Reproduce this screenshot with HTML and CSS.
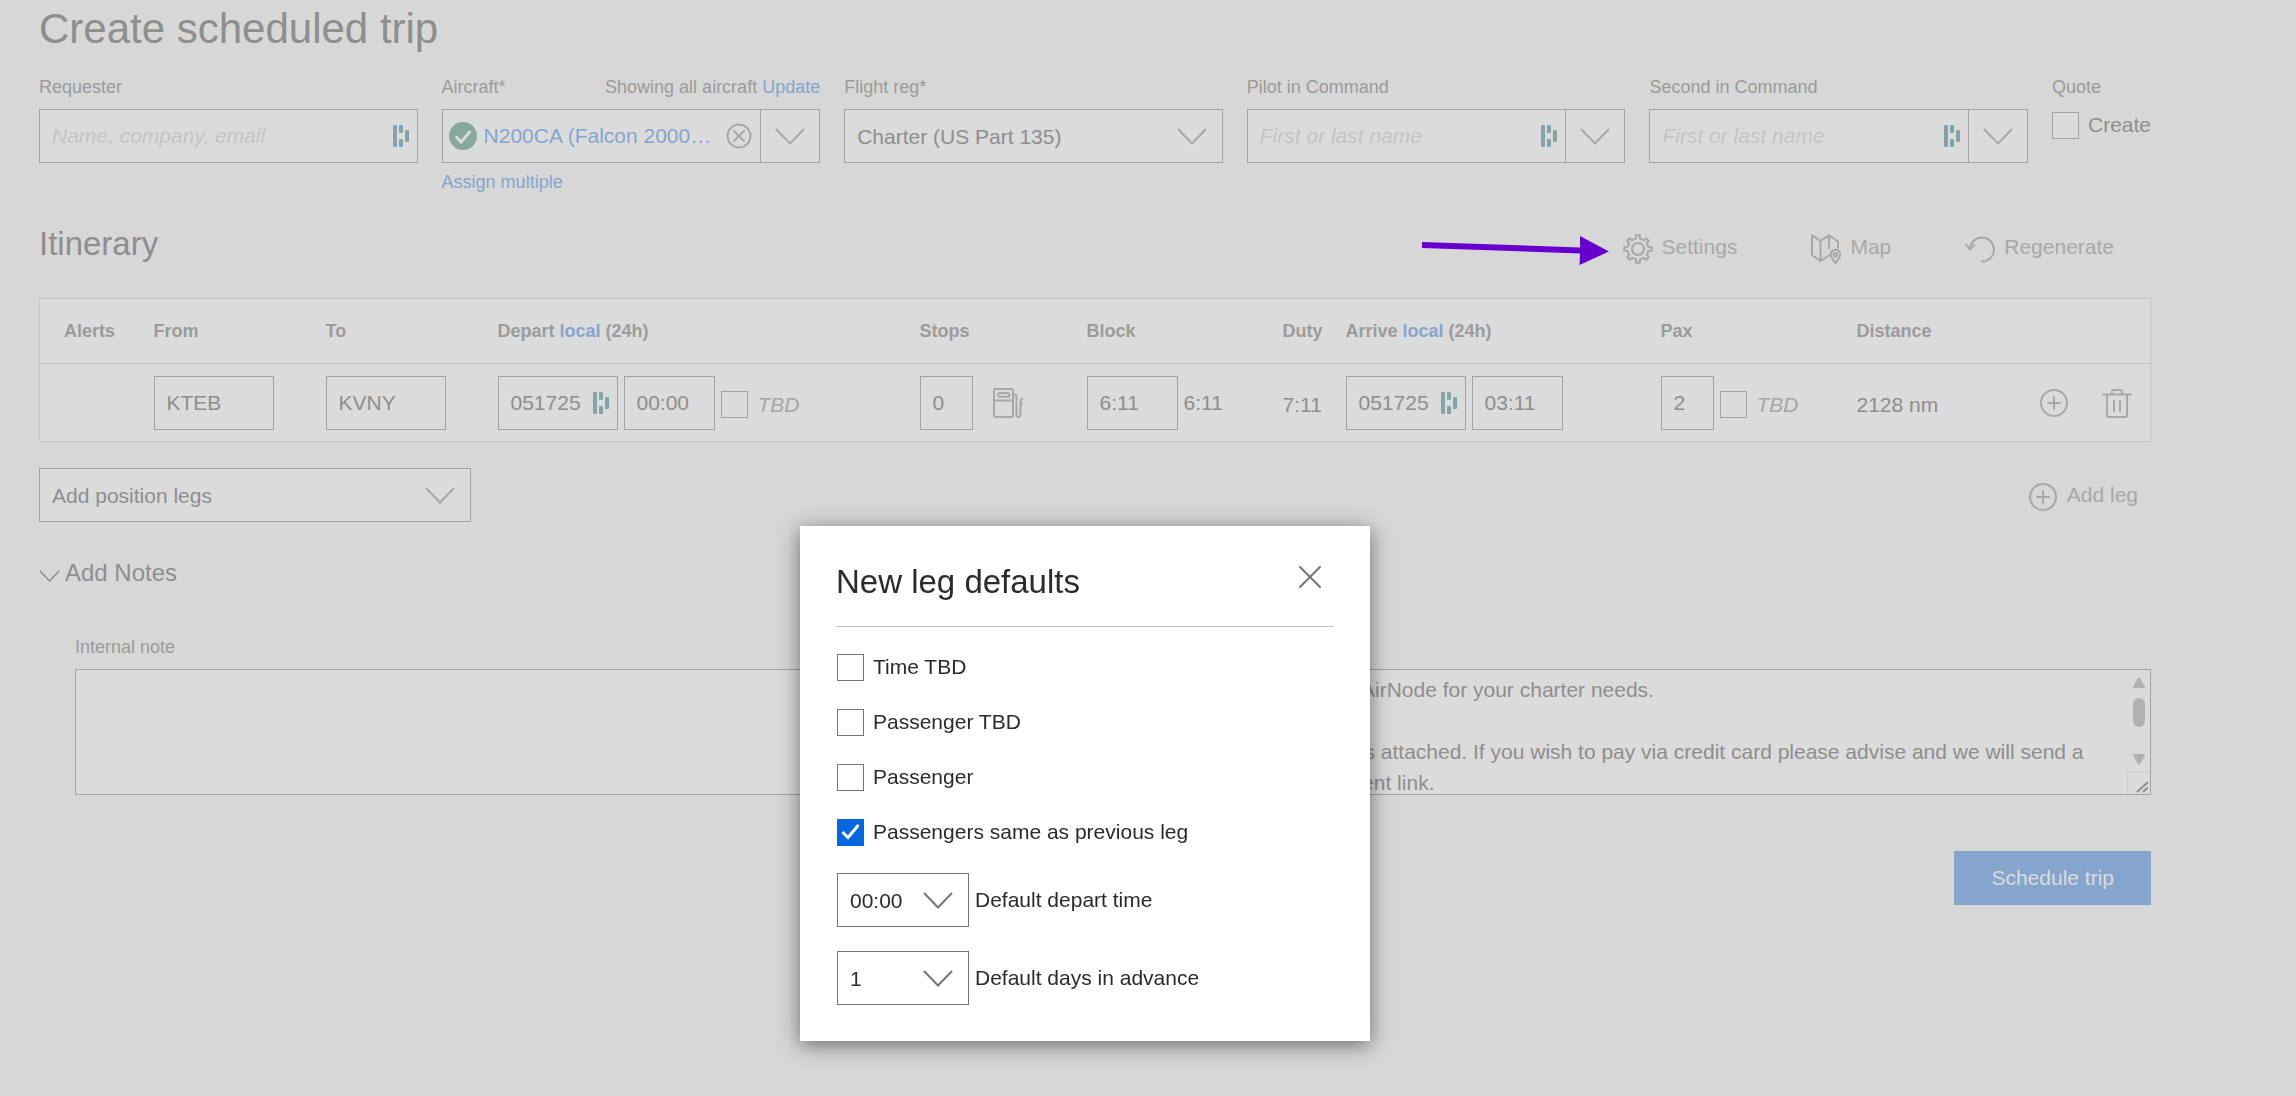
FILE: index.html
```
<!DOCTYPE html>
<html lang="en">
<head>
    <meta charset="UTF-8">
    <title>Create scheduled trip</title>
    <link rel="stylesheet" href="styles.css">
</head>
<body>
    <!-- shared icons -->
    <svg class="sprite" aria-hidden="true">
        <symbol id="bars" viewBox="0 0 16 22">
            <rect x="0" y="0" width="4" height="22" rx="1"/>
            <rect x="6" y="0" width="4" height="8" rx="1"/>
            <rect x="6" y="14" width="4" height="8" rx="1"/>
            <rect x="12" y="5" width="4" height="12" rx="1"/>
        </symbol>
        <symbol id="chevron" viewBox="0 0 30 17">
            <path d="M1 1 15 15.500 29 1"/>
        </symbol>
        <symbol id="plus" viewBox="0 0 30 30">
            <circle cx="15" cy="15" r="13"/>
            <path d="M15 9v12M9 15h12"/>
        </symbol>
    </svg>

    <main class="page">
        <h1>Create scheduled trip</h1>

        <form class="trip-form">
            <div class="field">
                <div class="label-row"><label for="requester">Requester</label></div>
                <div class="box">
                    <input type="text" id="requester" placeholder="Name, company, email">
                    <svg class="bars"><use href="#bars"/></svg>
                </div>
            </div>
            <div class="field">
                <div class="label-row">
                    <span>Aircraft*</span>
                    <span>Showing all aircraft <a href="#">Update</a></span>
                </div>
                <div class="box">
                    <svg class="check" viewBox="0 0 28 28">
                        <circle cx="14" cy="14" r="14"/>
                        <path d="M7 14.500 12 20 21.500 9"/>
                    </svg>
                    <a class="aircraft" href="#">N200CA (Falcon 2000…</a>
                    <button type="button" class="clear" aria-label="Clear aircraft">
                        <svg class="icon" viewBox="0 0 26 26">
                            <circle cx="13" cy="13" r="11.500"/>
                            <path d="M8 8l10 10M18 8 8 18"/>
                        </svg>
                    </button>
                    <button type="button" class="drop" aria-label="Show aircraft"><svg class="chevron"><use href="#chevron"/></svg></button>
                </div>
                <a class="assign" href="#">Assign multiple</a>
            </div>
            <div class="field">
                <div class="label-row"><label for="reg">Flight reg*</label></div>
                <select id="reg">
                    <option>Charter (US Part 135)</option>
                </select>
            </div>
            <div class="field">
                <div class="label-row"><label for="pic">Pilot in Command</label></div>
                <div class="box">
                    <input type="text" id="pic" placeholder="First or last name">
                    <svg class="bars"><use href="#bars"/></svg>
                    <button type="button" class="drop" aria-label="Show pilots"><svg class="chevron"><use href="#chevron"/></svg></button>
                </div>
            </div>
            <div class="field">
                <div class="label-row"><label for="sic">Second in Command</label></div>
                <div class="box">
                    <input type="text" id="sic" placeholder="First or last name">
                    <svg class="bars"><use href="#bars"/></svg>
                    <button type="button" class="drop" aria-label="Show pilots"><svg class="chevron"><use href="#chevron"/></svg></button>
                </div>
            </div>
            <div class="field">
                <div class="label-row"><span>Quote</span></div>
                <label class="tick quote"><input type="checkbox"> Create</label>
            </div>
        </form>

        <div class="section-head">
            <h2>Itinerary</h2>
            <div class="toolbar">
                <button type="button" class="tool">
                    <svg class="icon" viewBox="0 0 30 30">
                        <path d="M12.900 4.600 13.200 1.200H16.800L17.100 4.600 20.900 6.200 23.200 4.300 25.700 6.800 23.800 9.100 25.400 12.900 28.800 13.200V16.800L25.400 17.100 23.800 20.900 25.700 23.200 23.200 25.700 20.900 23.800 17.100 25.400 16.800 28.800H13.200L12.900 25.400 9.100 23.800 6.800 25.700 4.300 23.200 6.200 20.900 4.600 17.100 1.200 16.800V13.200L4.600 12.900 6.200 9.100 4.300 6.800 6.800 4.300 9.100 6.200Z"/>
                        <circle cx="15" cy="15" r="6"/>
                    </svg>
                    Settings
                </button>
                <button type="button" class="tool">
                    <svg class="icon" viewBox="0 0 30 30">
                        <path d="M9.500 7 1 1.200V21l8.500 6 8.500-5.500M9.500 7v20M9.500 7 18 1.200l9 6.300V14M18 1.200V14"/>
                        <path d="M24.500 29c-2-3.500-4.700-5.300-4.700-8.500a4.700 4.700 0 0 1 9.400 0c0 3.200-2.700 5-4.700 8.500z"/>
                        <circle cx="24.500" cy="20.700" r="1.700"/>
                    </svg>
                    Map
                </button>
                <button type="button" class="tool">
                    <svg class="icon" viewBox="0 0 30 30">
                        <path d="M1 10.500 5 15.500 9.500 11M5 15a12 12 0 1 1 12 12.500"/>
                    </svg>
                    Regenerate
                </button>
            </div>
        </div>

        <table class="legs">
            <colgroup>
                <col class="c-alerts"><col class="c-airport"><col class="c-airport"><col class="c-depart">
                <col class="c-stops"><col class="c-block"><col class="c-duty"><col class="c-arrive">
                <col class="c-pax"><col class="c-distance"><col>
            </colgroup>
            <thead>
                <tr>
                    <th>Alerts</th>
                    <th>From</th>
                    <th>To</th>
                    <th>Depart <a href="#">local</a> (24h)</th>
                    <th>Stops</th>
                    <th>Block</th>
                    <th>Duty</th>
                    <th>Arrive <a href="#">local</a> (24h)</th>
                    <th>Pax</th>
                    <th>Distance</th>
                    <th></th>
                </tr>
            </thead>
            <tbody>
                <tr>
                    <td></td>
                    <td><div class="box code"><input type="text" value="KTEB" aria-label="From"></div></td>
                    <td><div class="box code"><input type="text" value="KVNY" aria-label="To"></div></td>
                    <td>
                        <div class="cell">
                            <div class="box code"><input type="text" value="051725" aria-label="Depart date"><svg class="bars"><use href="#bars"/></svg></div>
                            <div class="box time"><input type="text" value="00:00" aria-label="Depart time"></div>
                            <label class="tick tbd"><input type="checkbox"> TBD</label>
                        </div>
                    </td>
                    <td>
                        <div class="cell">
                            <div class="box count"><input type="text" value="0" aria-label="Stops"></div>
                            <svg class="icon pump" viewBox="0 0 30 30">
                                <rect x="1" y="1" width="19" height="28" rx="1.500"/>
                                <path d="M1 12.500h19M20 6.500h2q1.500 0 1.500 2V26q0 3 2 3t2-3V15q0-3.500 2.500-4.500M27.500 15.500h2"/>
                                <rect x="5" y="5" width="11.500" height="3.800" rx="1.900"/>
                            </svg>
                        </div>
                    </td>
                    <td>
                        <div class="cell">
                            <div class="box time"><input type="text" value="6:11" aria-label="Block time"></div>
                            <span>6:11</span>
                        </div>
                    </td>
                    <td class="plain">7:11</td>
                    <td>
                        <div class="cell">
                            <div class="box code"><input type="text" value="051725" aria-label="Arrive date"><svg class="bars"><use href="#bars"/></svg></div>
                            <div class="box time"><input type="text" value="03:11" aria-label="Arrive time"></div>
                        </div>
                    </td>
                    <td>
                        <div class="cell">
                            <div class="box count"><input type="text" value="2" aria-label="Passengers"></div>
                            <label class="tick tbd"><input type="checkbox"> TBD</label>
                        </div>
                    </td>
                    <td class="plain">2128 nm</td>
                    <td>
                        <div class="actions">
                            <button type="button" aria-label="Insert leg"><svg class="icon"><use href="#plus"/></svg></button>
                            <button type="button" aria-label="Delete leg">
                                <svg class="icon" viewBox="0 0 30 30">
                                    <path d="M1 6.500h28M10 6.500V3.500q0-1.500 1.500-1.500h7q1.500 0 1.500 1.500v3M5 6.500V27q0 2 2 2h16q2 0 2-2V6.500M12 13v10M18 13v10"/>
                                </svg>
                            </button>
                        </div>
                    </td>
                </tr>
            </tbody>
        </table>

        <div class="below-legs">
            <select class="position-legs" aria-label="Add position legs">
                <option>Add position legs</option>
            </select>
            <button type="button" class="tool add-leg">
                <svg class="icon"><use href="#plus"/></svg>
                Add leg
            </button>
        </div>

        <button type="button" class="notes-toggle">
            <svg class="chevron small"><use href="#chevron"/></svg>
            Add Notes
        </button>

        <div class="notes">
            <div class="field">
                <div class="label-row"><label for="internal">Internal note</label></div>
                <textarea id="internal"></textarea>
            </div>
            <div class="field">
                <div class="label-row"><label for="customer">Customer note</label></div>
                <div class="scroll-box">
                    <textarea id="customer">Thank you for choosing AirNode for your charter needs.

The revised agreement is attached. If you wish to pay via credit card please advise and we will send a secure credit card payment link.

Safe travels,
AirNode</textarea>
                    <svg class="scrollbar" viewBox="0 0 23 124" aria-hidden="true">
                        <path class="solid" d="M6 17 10.500 8.500q1.500-2 3 0L18 17q.5 1-1 1H7q-1.500 0-1-1zM6 85l4.500 8.500q1.500 2 3 0L18 85q.5-1-1-1H7q-1.500 0-1 1z"/>
                        <rect class="solid" x="6" y="28" width="12" height="29" rx="6"/>
                        <path class="corner" d="M.5 124V101.500H23"/>
                        <path class="grip" d="M10 122 21 112M16 122l5-4.500"/>
                    </svg>
                </div>
            </div>
        </div>

        <div class="submit-row">
            <button type="submit" class="primary">Schedule trip</button>
        </div>
    </main>

    <!-- pointer to the settings button -->
    <svg class="pointer" viewBox="0 0 188 32" aria-hidden="true">
        <path d="M0 7 0 13 158 18.500 157.500 30 187 16.500 158 1 158 12.500Z"/>
    </svg>

    <section class="dialog" role="dialog" aria-labelledby="dialog-title">
        <header>
            <h2 id="dialog-title">New leg defaults</h2>
            <button type="button" aria-label="Close">
                <svg class="icon" viewBox="0 0 22 22"><path d="M1 1l20 20M21 1 1 21"/></svg>
            </button>
        </header>
        <div class="options">
            <label class="tick"><input type="checkbox"> Time TBD</label>
            <label class="tick"><input type="checkbox"> Passenger TBD</label>
            <label class="tick"><input type="checkbox"> Passenger</label>
            <label class="tick"><input type="checkbox" checked> Passengers same as previous leg</label>
        </div>
        <div class="default-row">
            <select id="depart-time"><option>00:00</option></select>
            <label for="depart-time">Default depart time</label>
        </div>
        <div class="default-row">
            <select id="days"><option>1</option></select>
            <label for="days">Default days in advance</label>
        </div>
    </section>
</body>
</html>
```
FILE: styles.css
```
* {
    box-sizing: border-box;
}
body {
    margin: 0;
    background-color: #d7d7d7;
    color: #8e8e8e;
    font-family: "Liberation Sans", Arial, Helvetica, sans-serif;
    font-size: 21px;
}
h1, h2 {
    margin: 0;
    font-weight: normal;
}
h1 {
    font-size: 42px;
    line-height: 48px;
}
h2 {
    font-size: 33px;
    line-height: 40px;
}
a {
    color: #85a5cf;
    text-decoration: none;
}
button {
    padding: 0;
    border: 0;
    background: none;
    color: inherit;
    font: inherit;
}
input, select, textarea {
    color: inherit;
    font: inherit;
}
.sprite {
    display: none;
}
.page {
    padding: 5px 145px 40px 39px;
}

/* icons */
.icon, .chevron {
    display: block;
    flex: none;
    fill: none;
    stroke: #a8a8a8;
    stroke-width: 2;
}
.icon {
    width: 30px;
    height: 30px;
    stroke-linecap: round;
    stroke-linejoin: round;
}
.chevron {
    width: 30px;
    height: 17px;
}
.chevron.small {
    width: 21px;
    height: 12px;
    margin-top: 6px;
    stroke: #8e8e8e;
}
.bars {
    flex: none;
    width: 16px;
    height: 22px;
    margin-right: 8px;
    fill: #84a3a8;
}
.check {
    flex: none;
    width: 28px;
    height: 28px;
    margin: 0 7px 0 6px;
    fill: #87a89f;
}
.check path {
    fill: none;
    stroke: #dbdbdb;
    stroke-width: 3;
}

/* form controls */
.box, select, textarea {
    border: 1px solid #a3a3a3;
    border-radius: 0;
    background-color: #dbdbdb;
}
.box {
    display: flex;
    align-items: center;
    height: 54px;
}
.box input {
    flex: 1;
    width: 0;
    min-width: 0;
    height: 100%;
    padding: 0 0 0 12px;
    border: 0;
    outline: none;
    background: none;
}
.box input::placeholder {
    color: #c4c4c4;
    font-style: italic;
    opacity: 1;
}
select {
    width: 100%;
    height: 54px;
    padding: 0 50px 0 12px;
    appearance: none;
    background-image: url("data:image/svg+xml,%3Csvg xmlns='http://www.w3.org/2000/svg' viewBox='0 0 30 17' fill='none' stroke='%23a8a8a8' stroke-width='2'%3E%3Cpath d='M1 1 15 15.500 29 1'/%3E%3C/svg%3E");
    background-repeat: no-repeat;
    background-position: right 15px center;
    background-size: 30px 17px;
}
.drop {
    display: flex;
    flex: none;
    align-items: center;
    justify-content: center;
    width: 59px;
    height: 100%;
    border-left: 1px solid #a3a3a3;
}
.tick {
    display: flex;
    align-items: center;
    gap: 9px;
    line-height: 28px;
}
.tick input {
    flex: none;
    width: 27px;
    height: 27px;
    margin: 0;
    appearance: none;
    border: 1px solid #a3a3a3;
    background-color: #dbdbdb;
}
.quote {
    padding-top: 2px;
}

/* trip details */
.trip-form {
    display: grid;
    grid-template-columns: repeat(5, 1fr) 99px;
    gap: 24px;
    margin-top: 23px;
}
.label-row {
    display: flex;
    justify-content: space-between;
    margin-bottom: 11px;
    color: #9b9b9b;
    font-size: 18px;
    line-height: 22px;
    white-space: nowrap;
}
.aircraft {
    flex: 1;
    white-space: nowrap;
}
.clear {
    margin-right: 8px;
}
.clear .icon {
    width: 26px;
    height: 26px;
}
.assign {
    display: block;
    margin-top: 8px;
    font-size: 18px;
    line-height: 22px;
}

/* itinerary */
.section-head {
    display: flex;
    justify-content: space-between;
    margin-top: 31px;
}
.toolbar {
    display: flex;
    align-items: flex-end;
}
.tool {
    display: flex;
    align-items: flex-start;
    gap: 9px;
    padding: 0 37px;
    color: #a8a8a8;
    line-height: 26px;
}
.legs {
    width: 100%;
    margin-top: 34px;
    border: 1px solid #c4c4c4;
    border-collapse: collapse;
    background-color: #dbdbdb;
    table-layout: fixed;
}
.legs th {
    height: 65px;
    padding: 0;
    border-bottom: 1px solid #c4c4c4;
    color: #9b9b9b;
    font-size: 18px;
    text-align: left;
    white-space: nowrap;
}
.legs th:first-child {
    padding-left: 24px;
}
.legs td {
    height: 78px;
    padding: 0;
}
.legs td.plain {
    padding-top: 4px;
}
.c-alerts { width: 114px; }
.c-airport { width: 172px; }
.c-depart { width: 422px; }
.c-stops { width: 167px; }
.c-block { width: 196px; }
.c-duty { width: 63px; }
.c-arrive { width: 315px; }
.c-pax { width: 196px; }
.c-distance { width: 160px; }
.cell {
    display: flex;
    align-items: center;
    gap: 6px;
}
.code {
    width: 120px;
}
.time {
    width: 91px;
}
.count {
    width: 53px;
}
.pump {
    margin-left: 14px;
}
.tbd {
    padding-top: 4px;
    color: #a6a6a6;
    font-style: italic;
    gap: 10px;
}
.actions {
    display: flex;
    justify-content: flex-end;
    gap: 33px;
    padding-right: 18px;
}
.below-legs {
    display: flex;
    align-items: center;
    justify-content: space-between;
    margin-top: 26px;
}
.position-legs {
    width: 432px;
}
.add-leg {
    padding: 4px 13px 0;
}

/* notes */
.notes-toggle {
    display: flex;
    align-items: center;
    gap: 5px;
    margin-top: 37px;
    font-size: 24px;
    line-height: 28px;
}
.notes {
    display: grid;
    grid-template-columns: 1fr 1fr;
    gap: 24px;
    margin-top: 49px;
    padding-left: 36px;
}
textarea {
    display: block;
    width: 100%;
    height: 126px;
    padding: 4px 12px;
    outline: none;
    line-height: 31px;
    resize: none;
}
.scroll-box {
    position: relative;
}
.scroll-box textarea {
    padding-right: 35px;
}
.scrollbar {
    position: absolute;
    top: 1px;
    right: 1px;
    width: 23px;
    height: 124px;
    fill: none;
}
.scrollbar .solid {
    fill: #b1b1b1;
}
.scrollbar .corner {
    stroke: #cccccc;
}
.scrollbar .grip {
    stroke: #8e8e8e;
    stroke-width: 2;
}
.submit-row {
    display: flex;
    justify-content: flex-end;
    margin-top: 56px;
}
.primary {
    height: 54px;
    padding: 0 37px;
    background-color: #85a5cf;
    color: #dbdbdb;
}

/* overlays */
.pointer {
    position: absolute;
    top: 235px;
    left: 1422px;
    width: 188px;
    height: 32px;
    fill: #6600cc;
}
.dialog {
    position: absolute;
    top: 526px;
    left: 800px;
    width: 570px;
    padding: 36px;
    background-color: #ffffff;
    box-shadow: 0 4px 20px rgba(0, 0, 0, 0.5);
    color: #2b2b2b;
}
.dialog .icon {
    width: 22px;
    height: 22px;
    stroke: #767676;
}
.dialog header {
    display: flex;
    justify-content: space-between;
    align-items: flex-start;
    padding: 0 13px 24px 0;
    border-bottom: 1px solid #c4c4c4;
}
.dialog header button {
    margin-top: 4px;
}
.options {
    display: grid;
    gap: 27px;
    padding: 26px 0 27px 1px;
}
.dialog .tick input {
    border-color: #767676;
    background-color: #ffffff;
}
.dialog .tick input:checked {
    border-color: #0566de;
    background: #0566de url("data:image/svg+xml,%3Csvg xmlns='http://www.w3.org/2000/svg' viewBox='0 0 25 25' fill='none' stroke='white' stroke-width='3'%3E%3Cpath d='M4.500 12 10 17.500 20.500 5'/%3E%3C/svg%3E");
}
.default-row {
    display: flex;
    align-items: center;
    gap: 6px;
    padding-left: 1px;
}
.default-row + .default-row {
    margin-top: 24px;
}
.default-row select {
    width: 132px;
    border-color: #767676;
    background-color: #ffffff;
    background-image: url("data:image/svg+xml,%3Csvg xmlns='http://www.w3.org/2000/svg' viewBox='0 0 30 17' fill='none' stroke='%23767676' stroke-width='2'%3E%3Cpath d='M1 1 15 15.500 29 1'/%3E%3C/svg%3E");
}
```
